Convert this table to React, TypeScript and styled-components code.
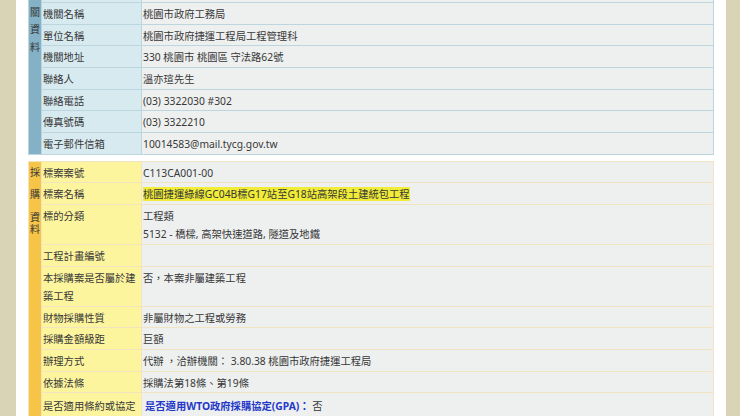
import React from "react";
import styled, { createGlobalStyle } from "styled-components";

const Global = createGlobalStyle`
  html, body { margin: 0; padding: 0; background: #d9d4b6; }
  body { font-family: "Noto Sans", "Noto Sans CJK TC", sans-serif; color: #373737; }
`;

type Theme = "blue" | "gold";

const palette = {
  blue: { side: "#84b1c5", label: "#d7eaf0", border: "#bdd5de" },
  gold: { side: "#f6c548", label: "#fdf59e", border: "#f1e4c0" },
};

const Page = styled.div`
  width: 710px;
  min-height: 416px;
  margin-left: 16px;
  background: #ffffff;
  padding: 0 12px;
  box-sizing: border-box;
  display: flex;
  flex-direction: column;
  gap: 6px;
`;

const Grid = styled.div<{ $t: Theme; $cutTop?: boolean }>`
  display: grid;
  grid-template-columns: 12px 99px 1fr;
  gap: 1px;
  background: ${(p) => palette[p.$t].border};
  border: 1px solid ${(p) => palette[p.$t].border};
  ${(p) => (p.$cutTop ? "border-top: none;" : "")}
  font-size: 10.3px;
  line-height: 18.33px;
`;

const Side = styled.div<{ $t: Theme; $rows: number }>`
  grid-column: 1;
  grid-row: 1 / span ${(p) => p.$rows};
  background: ${(p) => palette[p.$t].side};
  display: flex;
  flex-direction: column;
  align-items: center;
  font-size: 10px;
  line-height: 12px;
`;

const SideChar = styled.span<{ $mt: number }>`
  margin-top: ${(p) => p.$mt}px;
`;

const Label = styled.div<{ $t: Theme; $top?: number }>`
  grid-column: 2;
  background: ${(p) => palette[p.$t].label};
  padding: ${(p) => 2 + (p.$top ?? 0)}px 1px 0.34px;
  word-break: break-all;
`;

const Value = styled.div<{ $top?: number }>`
  grid-column: 3;
  background: #eef0f0;
  padding: ${(p) => 2 + (p.$top ?? 0)}px 1px 0.34px;
`;

const CutLabel = styled(Label)`
  padding: 0;
  height: 2px;
`;

const CutValue = styled(Value)`
  padding: 0;
  height: 2px;
`;

const Mark = styled.span`
  background: #f0ec38;
`;

const Strong = styled.span`
  color: #2438c8;
  font-weight: 700;
  margin-left: 2px;
`;

const Line = styled.div``;

const agency: [string, string][] = [
  ["機關名稱", "桃園市政府工務局"],
  ["單位名稱", "桃園市政府捷運工程局工程管理科"],
  ["機關地址", "330 桃園市 桃園區 守法路62號"],
  ["聯絡人", "溫亦瑄先生"],
  ["聯絡電話", "(03) 3322030 #302"],
  ["傳真號碼", "(03) 3322210"],
  ["電子郵件信箱", "10014583@mail.tycg.gov.tw"],
];

type Row = { k: string; v: React.ReactNode; top?: number };

const procurement: Row[] = [
  { k: "標案案號", v: "C113CA001-00" },
  { k: "標案名稱", v: <Mark>桃園捷運綠線GC04B標G17站至G18站高架段土建統包工程</Mark> },
  {
    k: "標的分類",
    v: (
      <>
        <Line>工程類</Line>
        <Line>5132 - 橋樑, 高架快速道路, 隧道及地鐵</Line>
      </>
    ),
  },
  { k: "工程計畫編號", v: "" },
  { k: "本採購案是否屬於建築工程", v: "否，本案非屬建築工程" },
  { k: "財物採購性質", v: "非屬財物之工程或勞務" },
  { k: "採購金額級距", v: "巨額" },
  { k: "辦理方式", v: "代辦 ，洽辦機關： 3.80.38 桃園市政府捷運工程局" },
  { k: "依據法條", v: "採購法第18條、第19條" },
  {
    k: "是否適用條約或協定",
    v: (
      <>
        <Strong>是否適用WTO政府採購協定(GPA)：</Strong> 否
      </>
    ),
    top: 2,
  },
];

const agencySide: [string, number][] = [
  ["關", 5.5],
  ["資", 5],
  ["料", 6.5],
];

const procSide: [string, number][] = [
  ["採", 4.5],
  ["購", 10],
  ["資", 10.5],
  ["料", 0],
];

export default function App() {
  return (
    <>
      <Global />
      <Page>
        <Grid $t="blue" $cutTop>
          <Side $t="blue" $rows={agency.length + 1}>
            {agencySide.map(([c, mt]) => (
              <SideChar key={c} $mt={mt}>
                {c}
              </SideChar>
            ))}
          </Side>
          <CutLabel $t="blue" />
          <CutValue />
          {agency.map(([k, v]) => (
            <React.Fragment key={k}>
              <Label $t="blue">{k}</Label>
              <Value>{v}</Value>
            </React.Fragment>
          ))}
        </Grid>
        <Grid $t="gold">
          <Side $t="gold" $rows={procurement.length}>
            {procSide.map(([c, mt]) => (
              <SideChar key={c} $mt={mt}>
                {c}
              </SideChar>
            ))}
          </Side>
          {procurement.map((r, i) => (
            <React.Fragment key={i}>
              <Label $t="gold" $top={r.top}>
                {r.k}
              </Label>
              <Value $top={r.top}>{r.v}</Value>
            </React.Fragment>
          ))}
        </Grid>
      </Page>
    </>
  );
}
